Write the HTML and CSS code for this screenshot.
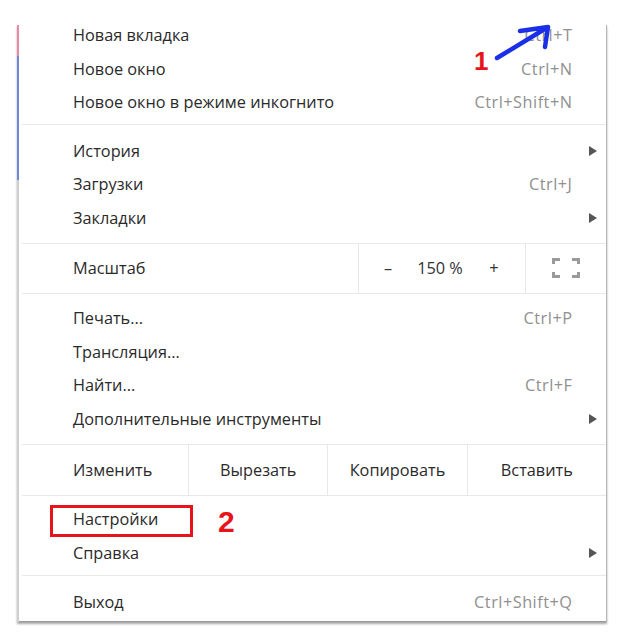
FILE: index.html
```html
<!DOCTYPE html>
<html lang="ru">
<head>
<meta charset="utf-8">
<title>Меню</title>
<link rel="stylesheet" href="styles.css">
</head>
<body>
<div class="page">
  <div class="frame">
    <div class="menu">
      <div class="inner">
        <div class="sec sec-first">
          <div class="row"><span class="label">Новая вкладка</span><span class="key">Ctrl+T</span></div>
          <div class="row"><span class="label">Новое окно</span><span class="key">Ctrl+N</span></div>
          <div class="row"><span class="label">Новое окно в режиме инкогнито</span><span class="key">Ctrl+Shift+N</span></div>
        </div>
        <div class="sep"></div>
        <div class="sec sec-a">
          <div class="row"><span class="label">История</span><span class="sub"></span></div>
          <div class="row"><span class="label">Загрузки</span><span class="key">Ctrl+J</span></div>
          <div class="row"><span class="label">Закладки</span><span class="sub"></span></div>
        </div>
        <div class="sep"></div>
        <div class="zoom">
          <div class="cell-label">Масштаб</div>
          <div class="zoom-ctrl">
            <span class="zbtn">–</span>
            <span class="zval">150 %</span>
            <span class="zbtn">+</span>
          </div>
          <div class="full">
            <svg width="28" height="20" viewBox="0 0 28 20" aria-hidden="true">
              <path d="M1.5 6V1.5H8M20 1.5H26.5V6M26.5 14V18.5H20M8 18.5H1.5V14" fill="none" stroke="#9a9a9a" stroke-width="3"/>
            </svg>
          </div>
        </div>
        <div class="sep"></div>
        <div class="sec sec-b">
          <div class="row"><span class="label">Печать...</span><span class="key">Ctrl+P</span></div>
          <div class="row"><span class="label">Трансляция...</span></div>
          <div class="row"><span class="label">Найти...</span><span class="key">Ctrl+F</span></div>
          <div class="row"><span class="label">Дополнительные инструменты</span><span class="sub"></span></div>
        </div>
        <div class="sep"></div>
        <div class="edit">
          <div class="cell-label">Изменить</div>
          <div class="ebtn">Вырезать</div>
          <div class="ebtn">Копировать</div>
          <div class="ebtn">Вставить</div>
        </div>
        <div class="sep"></div>
        <div class="sec sec-c">
          <div class="row"><span class="label">Настройки</span></div>
          <div class="row"><span class="label">Справка</span><span class="sub"></span></div>
        </div>
        <div class="sep"></div>
        <div class="sec sec-d">
          <div class="row"><span class="label">Выход</span><span class="key">Ctrl+Shift+Q</span></div>
        </div>
      </div>
    </div>
  </div>

  <svg class="arrow" width="70" height="50" viewBox="0 0 70 50" aria-hidden="true">
    <path d="M7 43L58 12M58 12L30 16M58 12L55 32" fill="none" stroke="#1a2fe6" stroke-width="4.5" stroke-linecap="round" stroke-linejoin="round"/>
  </svg>
  <span class="mark mark-1">1</span>
  <span class="mark mark-2">2</span>
  <div class="hl-box"></div>
</div>
</body>
</html>
```

FILE: styles.css
```css
html, body {
  margin: 0;
  padding: 0;
  background: #ffffff;
}

.page {
  position: relative;
  width: 627px;
  height: 635px;
  font-family: "Open Sans", "Noto Sans", "Liberation Sans", sans-serif;
  font-size: 16.3px;
  color: #2a2a2a;
}

.frame {
  margin-left: 17px;
  padding-top: 25px;
  width: 590px;
}

.menu {
  padding-left: 2px;
  background: linear-gradient(to bottom, #e98aa0 0, #e98aa0 31px, #7088d8 31px, #7088d8 155px, #cfcfcf 155px, #cfcfcf 100%);
  box-shadow: 0 2px 2px rgba(0, 0, 0, 0.35);
}

.inner {
  background: #ffffff;
  border-right: 1px solid #b8b8b8;
  border-bottom: 1px solid #9a9a9a;
  height: 596px;
  overflow: hidden;
}

.sec-first { margin-top: -6.5px; padding: 0 0 5px; }
.sec-a { padding: 9px 0 8px; }
.sec-b { padding: 8px 0 8px; }
.sec-c { padding: 7px 0 5px; }
.sec-d { padding: 10px 0 3px; }

.row {
  height: 33.5px;
  display: flex;
  align-items: center;
  padding-left: 54px;
  padding-right: 34px;
  white-space: nowrap;
}

.label {
  flex: 1;
}

.key {
  color: #909090;
  letter-spacing: 0.5px;
  margin-right: -0.5px;
}

.sub {
  width: 0;
  height: 0;
  border-left: 8px solid #555555;
  border-top: 5px solid transparent;
  border-bottom: 5px solid transparent;
  margin-right: -25px;
}

.sep {
  height: 1px;
  background: #e8e8e8;
  margin-left: 3px;
}

.zoom {
  height: 49px;
  display: grid;
  grid-template-columns: 339px 168px 1fr;
}

.cell-label {
  display: flex;
  align-items: center;
  padding-left: 54px;
}

.zoom-ctrl {
  border-left: 1px solid #e8e8e8;
  border-right: 1px solid #e8e8e8;
  display: grid;
  grid-template-columns: 58px 46px 1fr;
  align-items: center;
  text-align: center;
}

.zbtn {
  color: #333333;
}

.zval {
  color: #333333;
  white-space: nowrap;
}

.full {
  display: flex;
  align-items: center;
  justify-content: center;
}

.edit {
  height: 50px;
  display: grid;
  grid-template-columns: 169px repeat(3, 1fr);
}

.ebtn {
  border-left: 1px solid #e8e8e8;
  display: flex;
  align-items: center;
  justify-content: center;
}

.arrow {
  position: absolute;
  left: 490px;
  top: 15px;
}

.mark {
  position: absolute;
  font-family: "Liberation Sans", Arial, sans-serif;
  font-weight: bold;
  color: #e8141b;
  line-height: 1;
}

.mark-1 {
  left: 474px;
  top: 48px;
  font-size: 26px;
}

.mark-2 {
  left: 218px;
  top: 507px;
  font-size: 30px;
}

.hl-box {
  position: absolute;
  left: 50px;
  top: 505px;
  width: 137px;
  height: 26px;
  border: 3px solid #e8141b;
}
```
